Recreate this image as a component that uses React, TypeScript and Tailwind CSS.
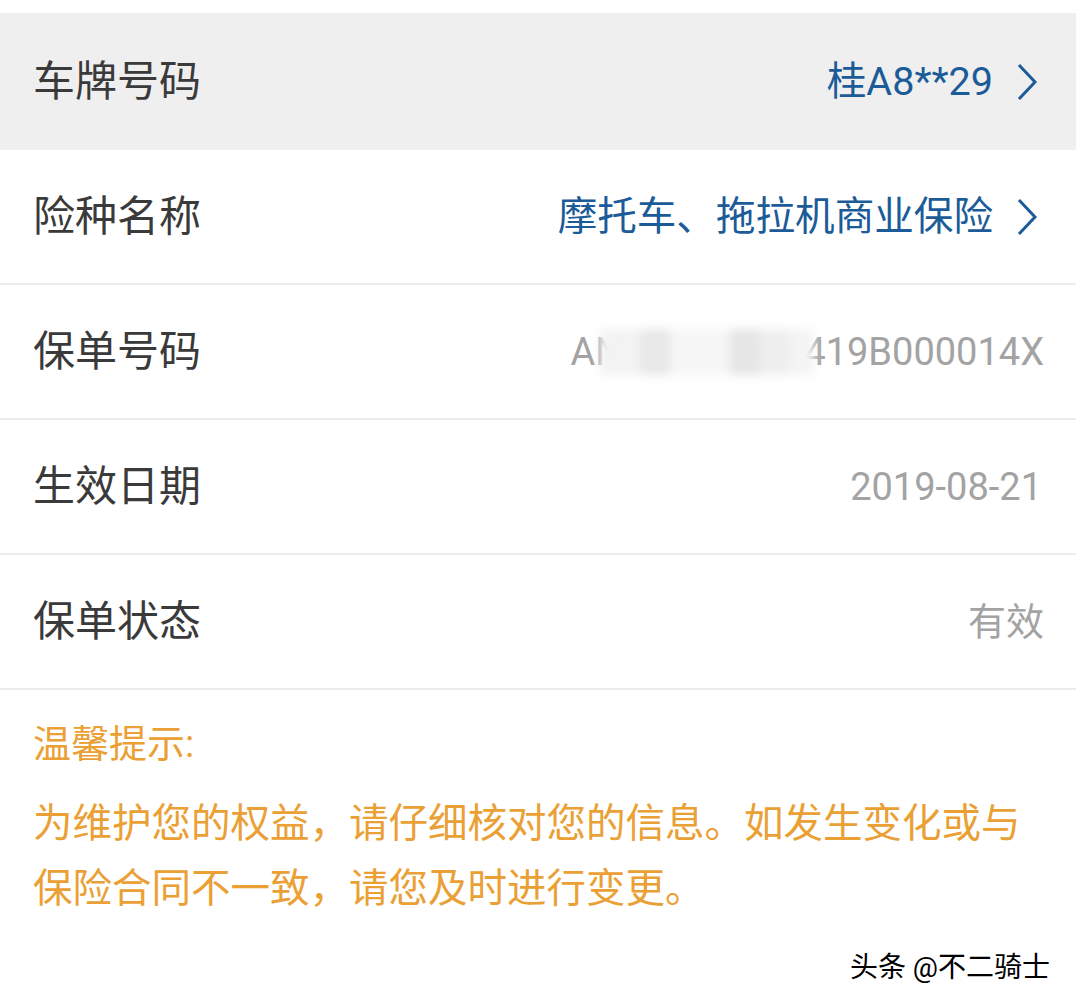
import React from "react";

const font = { fontFamily: "Roboto, 'Noto Sans CJK SC', sans-serif" };

function Chevron() {
  return (
    <svg width="22" height="38" viewBox="0 0 22 38" className="ml-[23px] mr-[6px] shrink-0">
      <path d="M3 2 L19 19 L3 36" fill="none" stroke="#1b5b98" strokeWidth="3" />
    </svg>
  );
}

type RowProps = {
  label: string;
  children: React.ReactNode;
  gray?: boolean;
  border?: boolean;
};

function Row({ label, children, gray, border = true }: RowProps) {
  return (
    <div
      className={`flex items-center justify-between pl-[33px] pr-[32px] ${
        gray ? "bg-[#efefef] h-[137px]" : "bg-white h-[135px]"
      } ${border ? "border-b-2 border-[#ececec]" : ""}`}
    >
      <span className="text-[42px] leading-none text-[#3a3a3a]">{label}</span>
      <div className="flex items-center">{children}</div>
    </div>
  );
}

export default function App() {
  return (
    <div className="w-[1076px] h-[1001px] bg-white overflow-hidden" style={font}>
      <div className="h-[13px] bg-white" />

      <Row label="车牌号码" gray border={false}>
        <span className="text-[39.6px] leading-none text-[#1b5b98]">桂A8**29</span>
        <Chevron />
      </Row>

      <Row label="险种名称">
        <span className="text-[39.6px] leading-none text-[#1b5b98]">摩托车、拖拉机商业保险</span>
        <Chevron />
      </Row>

      <Row label="保单号码">
        <div className="relative flex items-center text-[38px] leading-none text-[#a3a3a3]">
          <span>AN</span>
          <span className="w-[182px]" />
          <span>419B000014X</span>
          {/* redaction smudge */}
          <div className="absolute left-[30px] top-[-4px] w-[214px] h-[46px] bg-[#f7f7f7] blur-[5px] overflow-hidden">
            <div className="flex h-full">
              <div className="w-[40px] bg-[#f3f3f3]" />
              <div className="w-[30px] bg-[#e8e8e8]" />
              <div className="w-[60px] bg-[#f6f6f6]" />
              <div className="w-[30px] bg-[#e6e6e6]" />
              <div className="w-[30px] bg-[#eeeeee]" />
              <div className="w-[24px] bg-[#f4f4f4]" />
            </div>
          </div>
        </div>
      </Row>

      <Row label="生效日期">
        <span className="text-[38px] leading-none text-[#a3a3a3] pr-[2px]">2019-08-21</span>
      </Row>

      <Row label="保单状态">
        <span className="text-[38px] leading-none text-[#a3a3a3]">有效</span>
      </Row>

      <div className="pl-[33px] pr-[20px] pt-[30px] text-[#eaa034]">
        <div className="text-[38px] leading-[48px]">温馨提示:</div>
        <div className="mt-[23px] text-[39.5px] leading-[65px]">
          为维护您的权益，请仔细核对您的信息。如发生变化或与保险合同不一致，请您及时进行变更。
        </div>
      </div>

      <div className="flex justify-end pr-[26px] mt-[33px]">
        <span
          className="text-[28px] leading-none text-black"
          style={{ textShadow: "1px 1px 0 #fff, -1px -1px 0 #fff" }}
        >
          头条 @不二骑士
        </span>
      </div>
    </div>
  );
}
